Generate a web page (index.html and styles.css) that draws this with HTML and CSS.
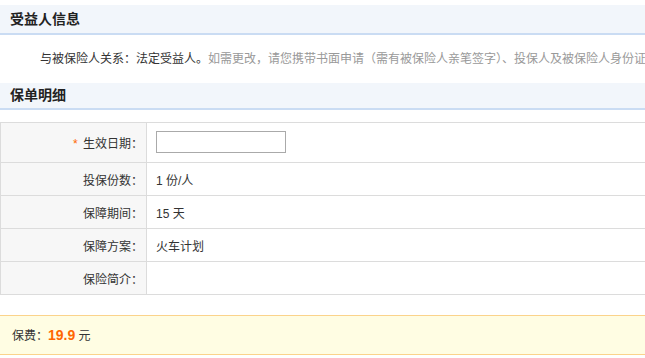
FILE: index.html
```html
<!DOCTYPE html>
<html lang="zh-cn">
<head>
    <meta charset="UTF-8">
    <title>保单明细</title>
    <link rel="stylesheet" href="styles.css">
</head>
<body>
<div class="page">
    <h3 class="sec-title">受益人信息</h3>
    <p class="benefit">与被保险人关系：法定受益人。<span class="tip">如需更改，请您携带书面申请（需有被保险人亲笔签字）、投保人及被保险人身份证原件到我司柜面办理变更手续。</span></p>

    <h3 class="sec-title">保单明细</h3>
    <table class="detail">
        <tr class="first">
            <th><em>*</em> 生效日期：</th>
            <td><input type="text" class="date-input"></td>
        </tr>
        <tr>
            <th>投保份数：</th>
            <td>1 份/人</td>
        </tr>
        <tr>
            <th>保障期间：</th>
            <td>15 天</td>
        </tr>
        <tr>
            <th>保障方案：</th>
            <td>火车计划</td>
        </tr>
        <tr>
            <th>保险简介：</th>
            <td></td>
        </tr>
    </table>

    <div class="fee">保费：<strong>19.9</strong> 元</div>
</div>
</body>
</html>
```

FILE: styles.css
```css
*{
    margin: 0;
    padding: 0;
}
html,body{
    overflow: hidden;
}
body{
    font-family: "Liberation Sans", "Noto Sans CJK SC", sans-serif;
    font-size: 12px;
    color: #333;
    background: #fff;
}
.page{
    width: 760px;
}
.sec-title{
    margin-top: 5px;
    height: 28px;
    line-height: 28px;
    padding-left: 10px;
    font-size: 14px;
    font-weight: bold;
    color: #222;
    background: #f2f6fb;
    border-bottom: 2px solid #cadcf3;
}
.benefit{
    height: 48px;
    line-height: 48px;
    padding-left: 40px;
    white-space: nowrap;
    color: #333;
}
.benefit + .sec-title{
    margin-top: 0;
    height: 25px;
    line-height: 25px;
}
.tip{
    color: #999;
}
.detail{
    margin-top: 12px;
    width: 100%;
    border-collapse: collapse;
}
.detail th,
.detail td{
    height: 32px;
    border: 1px solid #dcdcdc;
    font-weight: normal;
}
.detail .first th,
.detail .first td{
    height: 39px;
}
.detail th{
    width: 142px;
    padding-right: 3px;
    text-align: right;
    background: #f7f7f7;
    color: #333;
}
.detail td{
    padding-left: 9px;
    text-align: left;
}
.detail em{
    font-style: normal;
    color: #f60;
    margin-right: 2px;
}
.date-input{
    display: block;
    width: 128px;
    height: 20px;
    margin-top: -1px;
    border: 1px solid #aaa;
}
.fee{
    margin-top: 20px;
    height: 38px;
    line-height: 38px;
    padding-left: 12px;
    background: #fffde3;
    border-top: 1px solid #fbd38b;
    border-bottom: 1px solid #fbd38b;
}
.fee strong{
    color: #f60;
    font-size: 14px;
}
```
